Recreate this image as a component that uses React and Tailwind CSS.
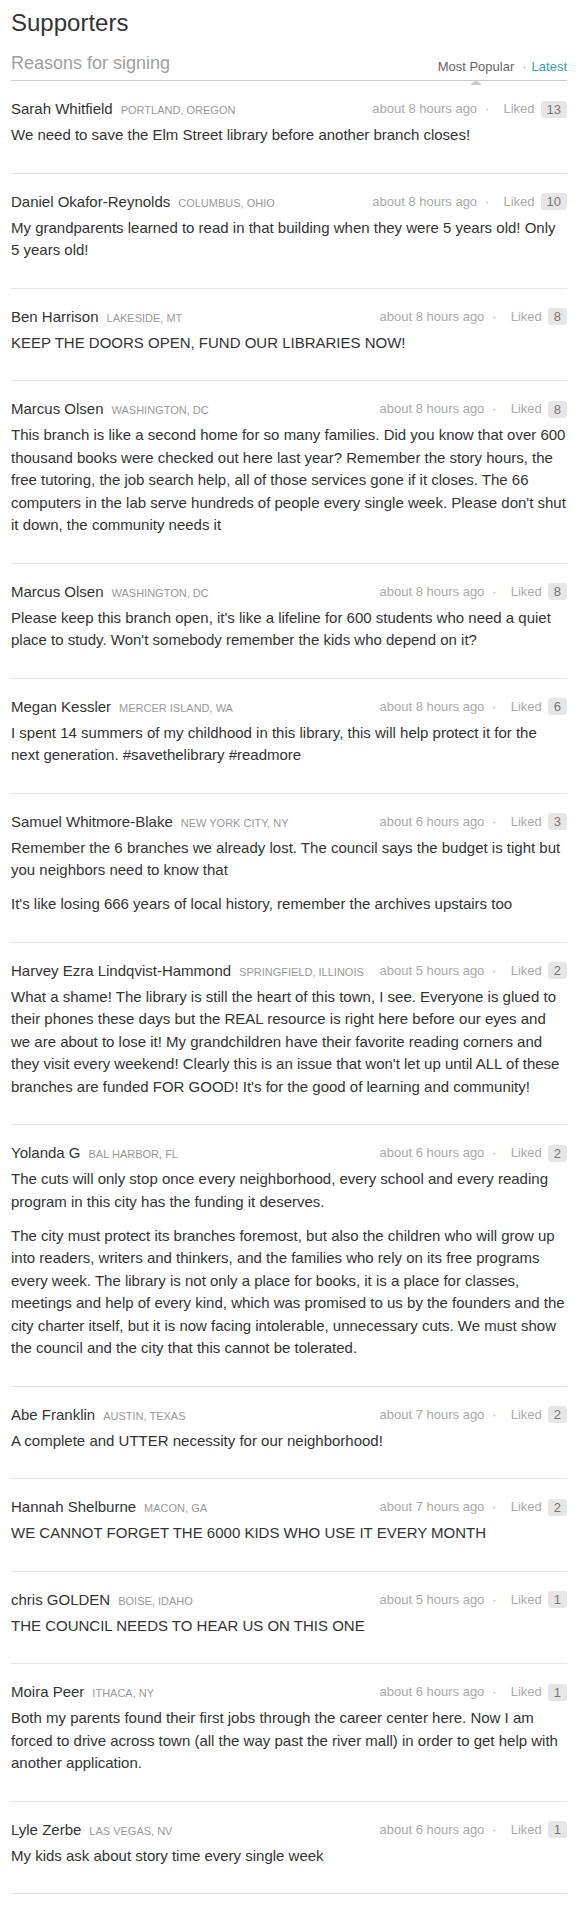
const entries = [
  {
    name: "Sarah Whitfield",
    place: "Portland, Oregon",
    time: "about 8 hours ago",
    likes: 13,
    body: ["We need to save the Elm Street library before another branch closes!"],
  },
  {
    name: "Daniel Okafor-Reynolds",
    place: "Columbus, Ohio",
    time: "about 8 hours ago",
    likes: 10,
    body: [
      "My grandparents learned to read in that building when they were 5 years old! Only 5 years old!",
    ],
  },
  {
    name: "Ben Harrison",
    place: "Lakeside, MT",
    time: "about 8 hours ago",
    likes: 8,
    body: ["KEEP THE DOORS OPEN, FUND OUR LIBRARIES NOW!"],
  },
  {
    name: "Marcus Olsen",
    place: "Washington, DC",
    time: "about 8 hours ago",
    likes: 8,
    body: [
      "This branch is like a second home for so many families. Did you know that over 600 thousand books were checked out here last year? Remember the story hours, the free tutoring, the job search help, all of those services gone if it closes. The 66 computers in the lab serve hundreds of people every single week. Please don't shut it down, the community needs it",
    ],
  },
  {
    name: "Marcus Olsen",
    place: "Washington, DC",
    time: "about 8 hours ago",
    likes: 8,
    body: [
      "Please keep this branch open, it's like a lifeline for 600 students who need a quiet place to study. Won't somebody remember the kids who depend on it?",
    ],
  },
  {
    name: "Megan Kessler",
    place: "Mercer Island, WA",
    time: "about 8 hours ago",
    likes: 6,
    body: [
      "I spent 14 summers of my childhood in this library, this will help protect it for the next generation. #savethelibrary #readmore",
    ],
  },
  {
    name: "Samuel Whitmore-Blake",
    place: "New York City, NY",
    time: "about 6 hours ago",
    likes: 3,
    body: [
      "Remember the 6 branches we already lost. The council says the budget is tight but you neighbors need to know that",
      "It's like losing 666 years of local history, remember the archives upstairs too",
    ],
  },
  {
    name: "Harvey Ezra Lindqvist-Hammond",
    place: "Springfield, Illinois",
    time: "about 5 hours ago",
    likes: 2,
    body: [
      "What a shame! The library is still the heart of this town, I see. Everyone is glued to their phones these days but the REAL resource is right here before our eyes and we are about to lose it! My grandchildren have their favorite reading corners and they visit every weekend! Clearly this is an issue that won't let up until ALL of these branches are funded FOR GOOD! It's for the good of learning and community!",
    ],
  },
  {
    name: "Yolanda G",
    place: "Bal Harbor, FL",
    time: "about 6 hours ago",
    likes: 2,
    body: [
      "The cuts will only stop once every neighborhood, every school and every reading program in this city has the funding it deserves.",
      "The city must protect its branches foremost, but also the children who will grow up into readers, writers and thinkers, and the families who rely on its free programs every week. The library is not only a place for books, it is a place for classes, meetings and help of every kind, which was promised to us by the founders and the city charter itself, but it is now facing intolerable, unnecessary cuts. We must show the council and the city that this cannot be tolerated.",
    ],
  },
  {
    name: "Abe Franklin",
    place: "Austin, Texas",
    time: "about 7 hours ago",
    likes: 2,
    body: ["A complete and UTTER necessity for our neighborhood!"],
  },
  {
    name: "Hannah Shelburne",
    place: "Macon, GA",
    time: "about 7 hours ago",
    likes: 2,
    body: ["WE CANNOT FORGET THE 6000 KIDS WHO USE IT EVERY MONTH"],
  },
  {
    name: "chris GOLDEN",
    place: "Boise, Idaho",
    time: "about 5 hours ago",
    likes: 1,
    body: ["THE COUNCIL NEEDS TO HEAR US ON THIS ONE"],
  },
  {
    name: "Moira Peer",
    place: "Ithaca, NY",
    time: "about 6 hours ago",
    likes: 1,
    body: [
      "Both my parents found their first jobs through the career center here. Now I am forced to drive across town (all the way past the river mall) in order to get help with another application.",
    ],
  },
  {
    name: "Lyle Zerbe",
    place: "Las Vegas, NV",
    time: "about 6 hours ago",
    likes: 1,
    body: ["My kids ask about story time every single week"],
  },
];

function Entry({ entry }) {
  return (
    <li className="pt-[18px] pb-[26px] border-b border-[#e5e5e5]">
      <div className="flex items-center justify-between h-5">
        <div className="flex items-baseline min-w-0">
          <span className="text-[15px] leading-5 text-[#333]">{entry.name}</span>
          <span className="ml-2 text-[11px] uppercase text-[#999]">{entry.place}</span>
        </div>
        <div className="flex items-center text-[13px] leading-5 text-[#aaa] whitespace-nowrap">
          <span>{entry.time}</span>
          <span className="ml-[8px]">·</span>
          <span className="ml-[14px]">Liked</span>
          <span className="ml-[6px] rounded-[3px] bg-[#e6e6e6] px-[6px] h-[17px] leading-[17px] text-[#777]">
            {entry.likes}
          </span>
        </div>
      </div>
      <div className="mt-[5px] text-[15px] leading-[22.5px] text-[#333]">
        {entry.body.map((p, i) => (
          <p key={i} className={i > 0 ? "mt-[11.5px]" : ""}>
            {p}
          </p>
        ))}
      </div>
    </li>
  );
}

export default function App() {
  return (
    <div className="min-h-screen bg-white font-['Liberation_Sans',Arial,sans-serif]">
      <div className="pl-[11px] pr-[12px]">
        <h1 className="pt-[9px] text-[24px] leading-[28px] text-[#333]">Supporters</h1>
        <div className="mt-[14px] flex items-end justify-between pb-[5px] border-b border-[#ccc]">
          <h2 className="text-[18px] leading-[24px] text-[#a0a0a0]">Reasons for signing</h2>
          <div className="flex items-center text-[13px] leading-[16px]">
            <span className="relative text-[#666]">
              Most Popular
              <span className="absolute left-1/2 -translate-x-1/2 top-[calc(100%+5px)] w-0 h-0 border-l-[6px] border-r-[6px] border-b-[5px] border-l-transparent border-r-transparent border-b-[#ccc]" />
            </span>
            <span className="ml-[8px] text-[#999]">·</span>
            <span className="ml-[5px] text-[#3a9fb5]">Latest</span>
          </div>
        </div>
        <ul>
          {entries.map((e, i) => (
            <Entry key={i} entry={e} />
          ))}
        </ul>
      </div>
    </div>
  );
}
